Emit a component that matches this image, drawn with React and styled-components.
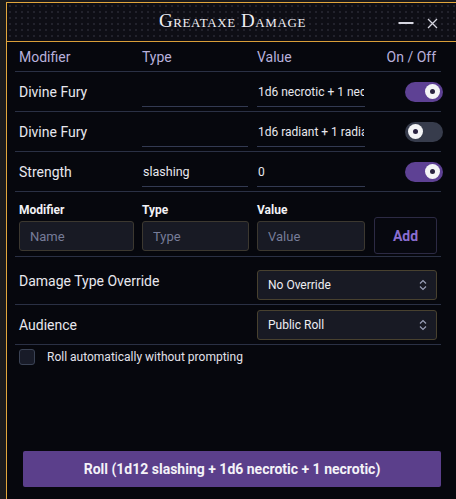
import React, {useState} from "react";
import styled, {createGlobalStyle} from "styled-components";

const GlobalStyle = createGlobalStyle`
    html, body {
        margin: 0;
        padding: 0;
        background: #1b1b1d;
        overflow: hidden;
    }
    * {
        box-sizing: border-box;
    }
`;

const modifiers = [
    {name: "Divine Fury", type: "", value: "1d6 necrotic + 1 necrotic", on: true},
    {name: "Divine Fury", type: "", value: "1d6 radiant + 1 radiant", on: false},
    {name: "Strength", type: "slashing", value: "0", on: true},
];

const App = () => {
    const [rows, setRows] = useState(modifiers);
    const [auto, setAuto] = useState(false);

    const toggleRow = (index) => {
        setRows(rows.map((row, i) => i === index ? {...row, on: !row.on} : row));
    };

    return (
        <>
            <GlobalStyle/>
            <Window>
                <TitleBar>
                    <Title>Greataxe Damage</Title>
                    <TitleButtons>
                        <IconButton aria-label="minimize">
                            <svg width="16" height="16" viewBox="0 0 16 16">
                                <path d="M0.5 8h15" stroke="#d6d6e0" strokeWidth="2"/>
                            </svg>
                        </IconButton>
                        <IconButton aria-label="close">
                            <svg width="11" height="11" viewBox="0 0 11 11">
                                <path d="M1 1l9 9M10 1l-9 9" stroke="#d6d6e0" strokeWidth="1.3"/>
                            </svg>
                        </IconButton>
                    </TitleButtons>
                </TitleBar>
                <Body>
                    <Table>
                        <HeadRow>
                            <HeadCell>Modifier</HeadCell>
                            <HeadCell>Type</HeadCell>
                            <HeadCell>Value</HeadCell>
                            <HeadCell $right>On / Off</HeadCell>
                        </HeadRow>
                        {rows.map((row, index) => (
                            <Row key={index}>
                                <NameCell>{row.name}</NameCell>
                                <Cell><LineInput defaultValue={row.type}/></Cell>
                                <Cell><LineInput $small defaultValue={row.value}/></Cell>
                                <ToggleCell>
                                    <Toggle $on={row.on} onClick={() => toggleRow(index)}>
                                        <Knob/>
                                    </Toggle>
                                </ToggleCell>
                            </Row>
                        ))}
                        <AddRow>
                            <AddField>
                                <AddLabel>Modifier</AddLabel>
                                <BoxInput placeholder="Name"/>
                            </AddField>
                            <AddField>
                                <AddLabel>Type</AddLabel>
                                <BoxInput placeholder="Type"/>
                            </AddField>
                            <AddField>
                                <AddLabel>Value</AddLabel>
                                <BoxInput placeholder="Value"/>
                            </AddField>
                            <AddButton>Add</AddButton>
                        </AddRow>
                    </Table>
                    <OptionRow $tall>
                        <OptionLabel $raise>Damage Type Override</OptionLabel>
                        <SelectWrap>
                            <Select defaultValue="none">
                                <option value="none">No Override</option>
                                <option value="slashing">Slashing</option>
                            </Select>
                            <Chevron/>
                        </SelectWrap>
                    </OptionRow>
                    <OptionRow>
                        <OptionLabel>Audience</OptionLabel>
                        <SelectWrap>
                            <Select defaultValue="public">
                                <option value="public">Public Roll</option>
                                <option value="gm">GM Roll</option>
                            </Select>
                            <Chevron/>
                        </SelectWrap>
                    </OptionRow>
                    <CheckRow onClick={() => setAuto(!auto)}>
                        <CheckBox $checked={auto}/>
                        <CheckLabel>Roll automatically without prompting</CheckLabel>
                    </CheckRow>
                    <Spacer/>
                    <RollButton>Roll (1d12 slashing + 1d6 necrotic + 1 necrotic)</RollButton>
                </Body>
            </Window>
        </>
    );
};

const Chevron = () => (
    <ChevronIcon width="8" height="12" viewBox="0 0 8 12">
        <path d="M1 4.5l3-3 3 3M1 7.5l3 3 3-3" fill="none" stroke="#9aa0b8" strokeWidth="1.2"/>
    </ChevronIcon>
);

export default App;

const Window = styled.div`
    margin: 2px 0 0 6px;
    height: 497px;
    width: 460px;
    border-top: 1px solid #e2a63c;
    border-left: 1px solid #e2a63c;
    background: #06070d;
    display: flex;
    flex-direction: column;
    font-family: Roboto, "Liberation Sans", sans-serif;
`;

const TitleBar = styled.div`
    height: 39px;
    flex-shrink: 0;
    position: relative;
    display: flex;
    align-items: center;
    justify-content: center;
    background-color: #0e0e15;
    background-image: radial-gradient(circle, #22222c 0.8px, transparent 1.1px);
    background-size: 6px 6px;
    border-bottom: 1px solid #d99e38;
`;

const Title = styled.div`
    font-family: "Liberation Serif", "DejaVu Serif", serif;
    font-variant: small-caps;
    font-size: 19px;
    letter-spacing: 0.6px;
    color: #f0eef4;
    margin-left: -8px;
    margin-top: -2px;
`;

const TitleButtons = styled.div`
    position: absolute;
    right: 28px;
    top: 12px;
    display: flex;
    align-items: center;
    gap: 13px;
`;

const IconButton = styled.button`
    background: none;
    border: none;
    padding: 0;
    display: flex;
    cursor: pointer;
`;

const Body = styled.div`
    flex: 1;
    display: flex;
    flex-direction: column;
    padding: 0 15px 12px 8px;
    width: 449px;
`;

const Table = styled.div`
    display: flex;
    flex-direction: column;
`;

const gridCols = `123px 115px 116px 72px`;

const HeadRow = styled.div`
    display: grid;
    grid-template-columns: ${gridCols};
    height: 30px;
    align-items: center;
    border-bottom: 1px solid #2a3044;
`;

const HeadCell = styled.div`
    font-size: 14px;
    color: #b8b0dc;
    padding: 0 4px;
    padding-top: 1px;
    text-align: ${p => p.$right ? "right" : "left"};
    padding-right: ${p => p.$right ? "5px" : "4px"};
`;

const Row = styled.div`
    display: grid;
    grid-template-columns: ${gridCols};
    height: 40px;
    align-items: center;
    border-bottom: 1px solid #2a3044;
`;

const Cell = styled.div`
    padding: 0 4px;
    align-self: stretch;
    display: flex;
    align-items: flex-end;
    padding-bottom: 4px;
`;

const NameCell = styled.div`
    padding: 0 4px;
    font-size: 14px;
    color: #e8e8ee;
`;

const LineInput = styled.input`
    width: ${p => p.$small ? "108px" : "106px"};
    height: 28px;
    background: transparent;
    border: none;
    border-bottom: 1px solid #333a52;
    color: #e8e8ee;
    font-family: Roboto, "Liberation Sans", sans-serif;
    font-size: ${p => p.$small ? "12px" : "12.5px"};
    padding: 0 1px 2px;
    outline: none;
`;

const ToggleCell = styled.div`
    display: flex;
    justify-content: flex-end;
    margin-right: -2px;
`;

const Toggle = styled.button`
    width: 38px;
    height: 20px;
    border-radius: 10px;
    border: none;
    padding: 0 3px;
    cursor: pointer;
    display: flex;
    align-items: center;
    justify-content: ${p => p.$on ? "flex-end" : "flex-start"};
    background: ${p => p.$on ? "#5e4194" : "#373c4c"};
`;

const Knob = styled.span`
    width: 15px;
    height: 15px;
    border-radius: 50%;
    background: #f4f4f6;
    display: flex;
    align-items: center;
    justify-content: center;

    &::after {
        content: "";
        width: 5px;
        height: 5px;
        border-radius: 50%;
        background: #2a2240;
    }
`;

const AddRow = styled.div`
    display: grid;
    grid-template-columns: ${gridCols};
    align-items: end;
    padding: 11px 0 5px;
    border-bottom: 1px solid #2a3044;
`;

const AddField = styled.div`
    display: flex;
    flex-direction: column;
    gap: 4px;
    padding: 0 4px;
`;

const AddLabel = styled.div`
    font-size: 12px;
    font-weight: 700;
    color: #f2f2f6;
`;

const BoxInput = styled.input`
    width: 100%;
    height: 30px;
    background: #181a24;
    border: 1px solid #3c3830;
    border-radius: 3px;
    color: #e8e8ee;
    font-family: Roboto, "Liberation Sans", sans-serif;
    font-size: 13px;
    padding: 0 10px;
    outline: none;

    &::placeholder {
        color: #767c98;
    }
`;

const AddButton = styled.button`
    justify-self: end;
    width: 63px;
    height: 37px;
    margin-right: 4px;
    margin-bottom: -3px;
    background: #07080f;
    border: 1px solid #2c2a44;
    border-radius: 3px;
    color: #8a6ed0;
    font-family: Roboto, "Liberation Sans", sans-serif;
    font-size: 14px;
    font-weight: 700;
    cursor: pointer;
`;

const OptionRow = styled.div`
    display: flex;
    align-items: center;
    justify-content: space-between;
    height: ${p => p.$tall ? "48px" : "40px"};
    padding: ${p => p.$tall ? "13px 4px 4px" : "4px 4px 4px"};
    border-bottom: 1px solid #2a3044;
`;

const OptionLabel = styled.div`
    font-size: 14px;
    color: #e8e8ee;
    margin-top: ${p => p.$raise ? "-9px" : "0"};
`;

const SelectWrap = styled.div`
    position: relative;
    width: 180px;
    height: 30px;
`;

const Select = styled.select`
    appearance: none;
    width: 100%;
    height: 100%;
    background: #181a24;
    border: 1px solid #48412f;
    border-radius: 3px;
    color: #eeeef2;
    font-family: Roboto, "Liberation Sans", sans-serif;
    font-size: 12px;
    padding: 0 10px;
    outline: none;
`;

const ChevronIcon = styled.svg`
    position: absolute;
    right: 10px;
    top: 9px;
    pointer-events: none;
`;

const CheckRow = styled.label`
    display: flex;
    align-items: center;
    gap: 12px;
    padding: 4px 4px;
    cursor: pointer;
`;

const CheckBox = styled.span`
    width: 16px;
    height: 16px;
    border-radius: 3px;
    border: 1px solid #3a4254;
    background: ${p => p.$checked ? "#5e4194" : "#181b28"};
`;

const CheckLabel = styled.span`
    font-size: 12px;
    color: #e2e2ea;
`;

const Spacer = styled.div`
    flex: 1;
`;

const RollButton = styled.button`
    margin-left: 8px;
    width: 418px;
    height: 36px;
    background: #5b3f8b;
    border: none;
    border-radius: 2px;
    color: #f4f2f8;
    font-family: Roboto, "Liberation Sans", sans-serif;
    font-size: 14px;
    font-weight: 700;
    cursor: pointer;
`;
